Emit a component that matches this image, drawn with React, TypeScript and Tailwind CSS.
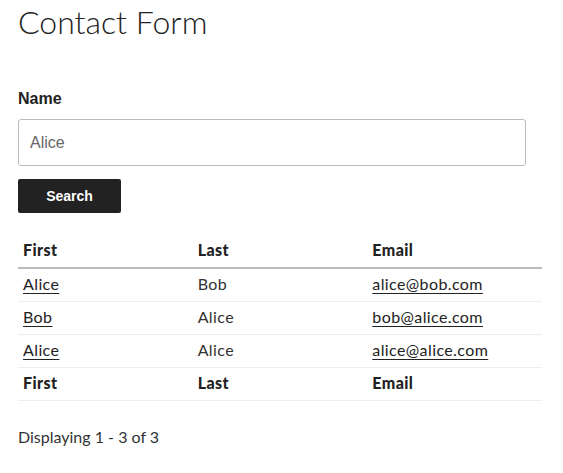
import React from "react";

const rows = [
  {first: "Alice", last: "Bob", email: "alice@bob.com"},
  {first: "Bob", last: "Alice", email: "bob@alice.com"},
  {first: "Alice", last: "Alice", email: "alice@alice.com"},
];

export default function App() {
  return (
    <div className="min-h-[473px] bg-white px-[18px] pt-[2px] font-['Lato','Liberation_Sans',sans-serif] text-[#333]">
      <h2 className="text-[32px] leading-[40px] font-light text-[#222]">Contact Form</h2>

      <form className="mt-[47px]" onSubmit={(e) => e.preventDefault()}>
        <label className="block font-['Liberation_Sans',sans-serif] text-[16px] leading-[20px] font-bold text-[#222]">
          Name
        </label>
        <input
          defaultValue="Alice"
          className="mt-[10px] block h-[47px] w-[508px] rounded-[3px] border border-[#bbb] bg-white px-[11px] font-['Liberation_Sans',sans-serif] text-[16px] text-[#666] outline-none"
        />
        <button
          type="submit"
          className="mt-[13px] block h-[34px] w-[103px] rounded-[2px] bg-[#222] font-['Liberation_Sans',sans-serif] text-[14px] font-bold text-white"
        >
          Search
        </button>
      </form>

      <table className="mt-[19px] w-[524px] table-fixed border-collapse text-[16px] tracking-[0.4px]">
        <thead>
          <tr className="h-[36px] border-b-2 border-[#bbb] text-left text-[#222]">
            <th className="px-[5px] font-black">First</th>
            <th className="px-[5px] font-black">Last</th>
            <th className="px-[5px] font-black">Email</th>
          </tr>
        </thead>
        <tbody>
          {rows.map((r, i) => (
            <tr key={i} className="h-[33px] border-b border-[#eee]">
              <td className="px-[5px] pb-[2px]">
                <a href="#" className="text-[#222] underline decoration-[#222] underline-offset-[3px]">{r.first}</a>
              </td>
              <td className="px-[5px] pb-[2px]">{r.last}</td>
              <td className="px-[5px] pb-[2px]">
                <a href="#" className="text-[#222] underline decoration-[#222] underline-offset-[3px]">{r.email}</a>
              </td>
            </tr>
          ))}
        </tbody>
        <tfoot>
          <tr className="h-[33px] border-b border-[#eee] text-left text-[#222]">
            <th className="px-[5px] pb-[2px] font-black">First</th>
            <th className="px-[5px] pb-[2px] font-black">Last</th>
            <th className="px-[5px] pb-[2px] font-black">Email</th>
          </tr>
        </tfoot>
      </table>

      <p className="mt-[25px] text-[16px] leading-[22px]">Displaying 1 - 3 of 3</p>
    </div>
  );
}
